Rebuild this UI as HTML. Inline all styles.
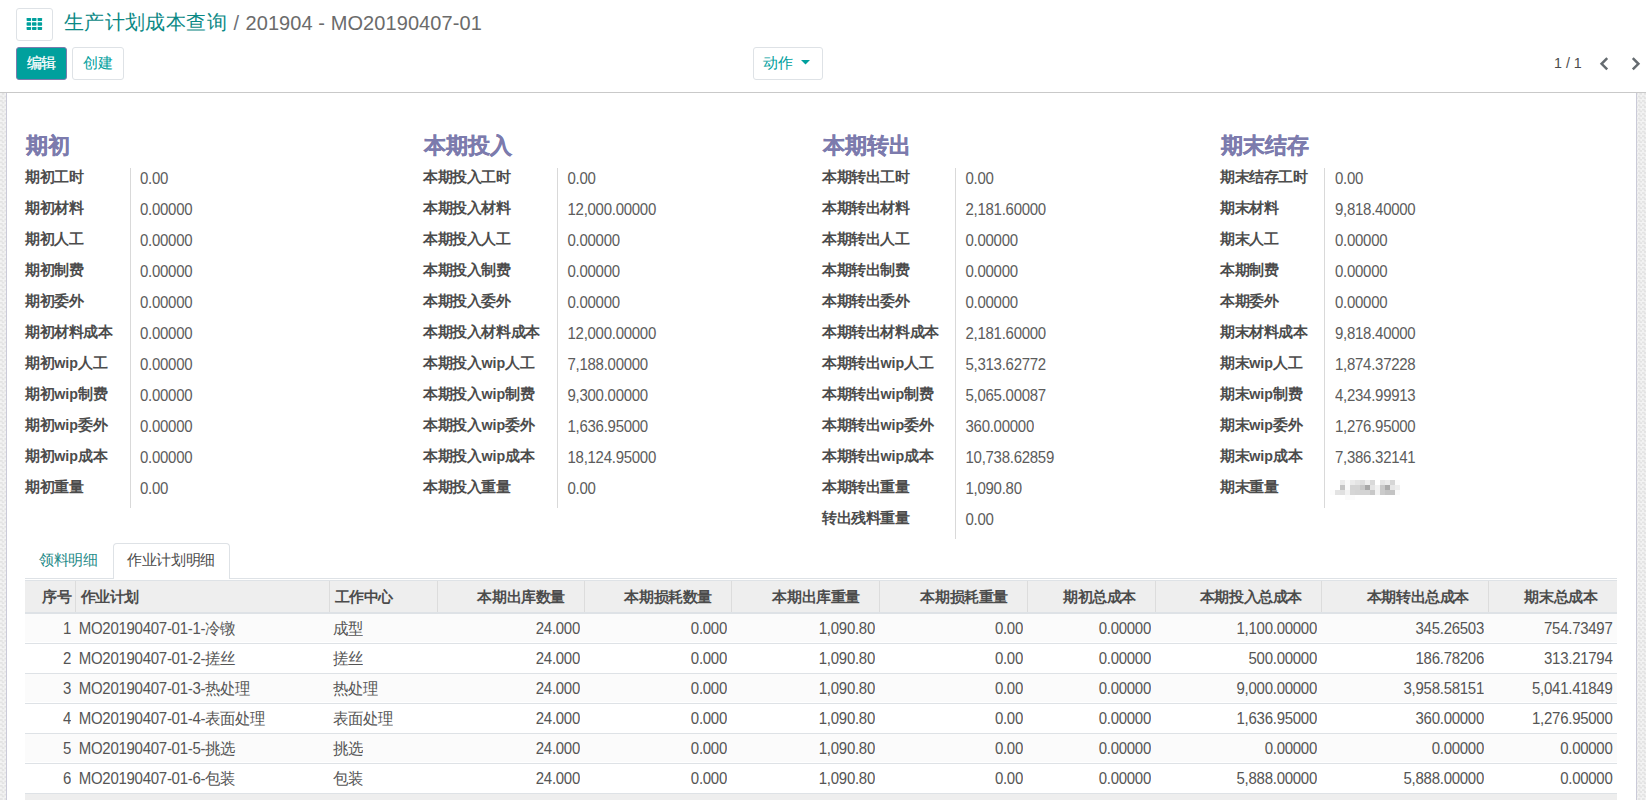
<!DOCTYPE html><html><head><meta charset="utf-8"><style>
*{box-sizing:border-box;margin:0;padding:0}
html,body{width:1646px;height:800px;overflow:hidden;background:#fff;font-family:"Liberation Sans", sans-serif;color:#4c4c4c}
.a{position:absolute;white-space:nowrap}
.cp{position:absolute;left:0;top:0;width:1646px;height:93px;background:#fff;border-bottom:1px solid #c9c9c9}
.bg{position:absolute;left:0;top:93px;width:1646px;height:707px;background:repeating-conic-gradient(#e3e3e3 0 25%,#f3f3f3 0 50%) 0 0/4.4px 4.4px}
.sheet{position:absolute;left:6px;top:93px;width:1631px;height:707px;background:#fff;border-left:1px solid #cacad8;border-right:1px solid #cacad8}
.btn{position:absolute;border:1px solid #dee2e6;border-radius:3px;background:#fff;color:#00A09D;font-size:14.3px;line-height:30.5px;text-align:center}
.btn .c{font-size:14.9px;letter-spacing:-0.3px}
.h{position:absolute;font-size:22px;font-weight:bold;color:#7C7BAD;line-height:30px;white-space:nowrap;-webkit-text-stroke:0.3px #7C7BAD}
.lb{position:absolute;font-size:14.3px;font-weight:bold;color:#4c4c4c;line-height:20px;white-space:nowrap}
.lb .c{font-size:14.9px;letter-spacing:-0.4px}
.vl{position:absolute;font-size:15px;letter-spacing:-0.27px;transform:scaleY(1.04);transform-origin:0 15px;color:#5c5c5c;line-height:20px;white-space:nowrap}
.sep{position:absolute;width:1px;background:#d9d9d9}
.tab{position:absolute;font-size:14.3px;line-height:20px;white-space:nowrap}
.tab .c{font-size:14.95px;letter-spacing:-0.35px}
.th{position:absolute;font-size:14.3px;font-weight:bold;color:#4c4c4c;line-height:20px;white-space:nowrap}
.th .c{font-size:14.95px;letter-spacing:-0.4px}
.td{position:absolute;font-size:15px;letter-spacing:-0.27px;transform:scaleY(1.04);transform-origin:0 15px;color:#555;line-height:20px;white-space:nowrap}
.td .c{font-size:15.0px;letter-spacing:0}
.ttl .c{font-size:20px;letter-spacing:0.45px}
</style></head><body><div class="cp"></div>
<div class="bg"></div>
<div class="sheet"></div>
<div class="a" style="left:16px;top:8px;width:37px;height:33px;border:1px solid #dee2e6;border-radius:3px;background:#fff"></div>
<svg class="a" style="left:26px;top:17px" width="17" height="14" viewBox="0 0 17 14"><rect x="0.6" y="0.9" width="4.5" height="3.0" rx="0.7" fill="#00A09D"/><rect x="6.0" y="0.9" width="4.5" height="3.0" rx="0.7" fill="#00A09D"/><rect x="11.6" y="0.9" width="4.5" height="3.0" rx="0.7" fill="#00A09D"/><rect x="0.6" y="5.2" width="4.5" height="3.6" rx="0.7" fill="#00A09D"/><rect x="6.0" y="5.2" width="4.5" height="3.6" rx="0.7" fill="#00A09D"/><rect x="11.6" y="5.2" width="4.5" height="3.6" rx="0.7" fill="#00A09D"/><rect x="0.6" y="9.9" width="4.5" height="3.0" rx="0.7" fill="#00A09D"/><rect x="6.0" y="9.9" width="4.5" height="3.0" rx="0.7" fill="#00A09D"/><rect x="11.6" y="9.9" width="4.5" height="3.0" rx="0.7" fill="#00A09D"/></svg>
<div class="a ttl" style="left:63.7px;top:9px;font-size:20px;line-height:26px;color:#0b8985"><span class="c">生产计划成本查询</span></div>
<div class="a" style="left:233.5px;top:9.5px;font-size:20px;line-height:26px;color:#6e7177">/</div>
<div class="a" style="left:245.5px;top:9.5px;letter-spacing:0.08px;font-size:20px;line-height:26px;color:#6b6b6b;transform:scaleY(1.05);transform-origin:0 20px">201904 - MO20190407-01</div>
<div class="btn" style="left:16px;top:47px;width:51px;height:33px;background:#00A09D;border-color:#7C7BAD;color:#fff;-webkit-text-stroke:0.25px #fff;line-height:30px"><span class="c">编辑</span></div>
<div class="btn" style="left:72px;top:47px;width:52px;height:33px"><span class="c">创建</span></div>
<div class="btn" style="left:753px;top:47px;width:70px;height:33px;text-align:left;padding-left:9px"><span class="c">动作</span></div>
<svg class="a" style="left:801px;top:60px" width="9" height="5" viewBox="0 0 9 5"><path d="M0 0H9L4.5 4.5Z" fill="#00A09D"/></svg>
<div class="a" style="left:1554px;top:53px;font-size:14.3px;line-height:20px;color:#4c4c4c">1 / 1</div>
<svg class="a" style="left:1598px;top:55.5px" width="12" height="16" viewBox="0 0 12 16"><path d="M9.2 2.2L3.6 7.8L9.2 13.4" stroke="#656b70" stroke-width="2.5" fill="none"/></svg>
<svg class="a" style="left:1629.5px;top:55.5px" width="12" height="16" viewBox="0 0 12 16"><path d="M2.8 2.2L8.4 7.8L2.8 13.4" stroke="#656b70" stroke-width="2.5" fill="none"/></svg>
<div class="h" style="left:26px;top:130.6px">期初</div>
<div class="sep" style="left:130.0px;top:168px;height:340px"></div>
<div class="lb" style="left:25px;top:166.5px"><span class="c">期初工时</span></div>
<div class="vl" style="left:140px;top:169px">0.00</div>
<div class="lb" style="left:25px;top:197.5px"><span class="c">期初材料</span></div>
<div class="vl" style="left:140px;top:200px">0.00000</div>
<div class="lb" style="left:25px;top:228.5px"><span class="c">期初人工</span></div>
<div class="vl" style="left:140px;top:231px">0.00000</div>
<div class="lb" style="left:25px;top:259.5px"><span class="c">期初制费</span></div>
<div class="vl" style="left:140px;top:262px">0.00000</div>
<div class="lb" style="left:25px;top:290.5px"><span class="c">期初委外</span></div>
<div class="vl" style="left:140px;top:293px">0.00000</div>
<div class="lb" style="left:25px;top:321.5px"><span class="c">期初材料成本</span></div>
<div class="vl" style="left:140px;top:324px">0.00000</div>
<div class="lb" style="left:25px;top:352.5px"><span class="c">期初</span>wip<span class="c">人工</span></div>
<div class="vl" style="left:140px;top:355px">0.00000</div>
<div class="lb" style="left:25px;top:383.5px"><span class="c">期初</span>wip<span class="c">制费</span></div>
<div class="vl" style="left:140px;top:386px">0.00000</div>
<div class="lb" style="left:25px;top:414.5px"><span class="c">期初</span>wip<span class="c">委外</span></div>
<div class="vl" style="left:140px;top:417px">0.00000</div>
<div class="lb" style="left:25px;top:445.5px"><span class="c">期初</span>wip<span class="c">成本</span></div>
<div class="vl" style="left:140px;top:448px">0.00000</div>
<div class="lb" style="left:25px;top:476.5px"><span class="c">期初重量</span></div>
<div class="vl" style="left:140px;top:479px">0.00</div>
<div class="h" style="left:424px;top:130.6px">本期投入</div>
<div class="sep" style="left:557.0px;top:168px;height:340px"></div>
<div class="lb" style="left:423px;top:166.5px"><span class="c">本期投入工时</span></div>
<div class="vl" style="left:567.5px;top:169px">0.00</div>
<div class="lb" style="left:423px;top:197.5px"><span class="c">本期投入材料</span></div>
<div class="vl" style="left:567.5px;top:200px">12,000.00000</div>
<div class="lb" style="left:423px;top:228.5px"><span class="c">本期投入人工</span></div>
<div class="vl" style="left:567.5px;top:231px">0.00000</div>
<div class="lb" style="left:423px;top:259.5px"><span class="c">本期投入制费</span></div>
<div class="vl" style="left:567.5px;top:262px">0.00000</div>
<div class="lb" style="left:423px;top:290.5px"><span class="c">本期投入委外</span></div>
<div class="vl" style="left:567.5px;top:293px">0.00000</div>
<div class="lb" style="left:423px;top:321.5px"><span class="c">本期投入材料成本</span></div>
<div class="vl" style="left:567.5px;top:324px">12,000.00000</div>
<div class="lb" style="left:423px;top:352.5px"><span class="c">本期投入</span>wip<span class="c">人工</span></div>
<div class="vl" style="left:567.5px;top:355px">7,188.00000</div>
<div class="lb" style="left:423px;top:383.5px"><span class="c">本期投入</span>wip<span class="c">制费</span></div>
<div class="vl" style="left:567.5px;top:386px">9,300.00000</div>
<div class="lb" style="left:423px;top:414.5px"><span class="c">本期投入</span>wip<span class="c">委外</span></div>
<div class="vl" style="left:567.5px;top:417px">1,636.95000</div>
<div class="lb" style="left:423px;top:445.5px"><span class="c">本期投入</span>wip<span class="c">成本</span></div>
<div class="vl" style="left:567.5px;top:448px">18,124.95000</div>
<div class="lb" style="left:423px;top:476.5px"><span class="c">本期投入重量</span></div>
<div class="vl" style="left:567.5px;top:479px">0.00</div>
<div class="h" style="left:823px;top:130.6px">本期转出</div>
<div class="sep" style="left:955.0px;top:168px;height:371px"></div>
<div class="lb" style="left:822px;top:166.5px"><span class="c">本期转出工时</span></div>
<div class="vl" style="left:965.5px;top:169px">0.00</div>
<div class="lb" style="left:822px;top:197.5px"><span class="c">本期转出材料</span></div>
<div class="vl" style="left:965.5px;top:200px">2,181.60000</div>
<div class="lb" style="left:822px;top:228.5px"><span class="c">本期转出人工</span></div>
<div class="vl" style="left:965.5px;top:231px">0.00000</div>
<div class="lb" style="left:822px;top:259.5px"><span class="c">本期转出制费</span></div>
<div class="vl" style="left:965.5px;top:262px">0.00000</div>
<div class="lb" style="left:822px;top:290.5px"><span class="c">本期转出委外</span></div>
<div class="vl" style="left:965.5px;top:293px">0.00000</div>
<div class="lb" style="left:822px;top:321.5px"><span class="c">本期转出材料成本</span></div>
<div class="vl" style="left:965.5px;top:324px">2,181.60000</div>
<div class="lb" style="left:822px;top:352.5px"><span class="c">本期转出</span>wip<span class="c">人工</span></div>
<div class="vl" style="left:965.5px;top:355px">5,313.62772</div>
<div class="lb" style="left:822px;top:383.5px"><span class="c">本期转出</span>wip<span class="c">制费</span></div>
<div class="vl" style="left:965.5px;top:386px">5,065.00087</div>
<div class="lb" style="left:822px;top:414.5px"><span class="c">本期转出</span>wip<span class="c">委外</span></div>
<div class="vl" style="left:965.5px;top:417px">360.00000</div>
<div class="lb" style="left:822px;top:445.5px"><span class="c">本期转出</span>wip<span class="c">成本</span></div>
<div class="vl" style="left:965.5px;top:448px">10,738.62859</div>
<div class="lb" style="left:822px;top:476.5px"><span class="c">本期转出重量</span></div>
<div class="vl" style="left:965.5px;top:479px">1,090.80</div>
<div class="lb" style="left:822px;top:507.5px"><span class="c">转出残料重量</span></div>
<div class="vl" style="left:965.5px;top:510px">0.00</div>
<div class="h" style="left:1221px;top:130.6px">期末结存</div>
<div class="sep" style="left:1324.0px;top:168px;height:340px"></div>
<div class="lb" style="left:1220px;top:166.5px"><span class="c">期末结存工时</span></div>
<div class="vl" style="left:1335px;top:169px">0.00</div>
<div class="lb" style="left:1220px;top:197.5px"><span class="c">期末材料</span></div>
<div class="vl" style="left:1335px;top:200px">9,818.40000</div>
<div class="lb" style="left:1220px;top:228.5px"><span class="c">期末人工</span></div>
<div class="vl" style="left:1335px;top:231px">0.00000</div>
<div class="lb" style="left:1220px;top:259.5px"><span class="c">本期制费</span></div>
<div class="vl" style="left:1335px;top:262px">0.00000</div>
<div class="lb" style="left:1220px;top:290.5px"><span class="c">本期委外</span></div>
<div class="vl" style="left:1335px;top:293px">0.00000</div>
<div class="lb" style="left:1220px;top:321.5px"><span class="c">期末材料成本</span></div>
<div class="vl" style="left:1335px;top:324px">9,818.40000</div>
<div class="lb" style="left:1220px;top:352.5px"><span class="c">期末</span>wip<span class="c">人工</span></div>
<div class="vl" style="left:1335px;top:355px">1,874.37228</div>
<div class="lb" style="left:1220px;top:383.5px"><span class="c">期末</span>wip<span class="c">制费</span></div>
<div class="vl" style="left:1335px;top:386px">4,234.99913</div>
<div class="lb" style="left:1220px;top:414.5px"><span class="c">期末</span>wip<span class="c">委外</span></div>
<div class="vl" style="left:1335px;top:417px">1,276.95000</div>
<div class="lb" style="left:1220px;top:445.5px"><span class="c">期末</span>wip<span class="c">成本</span></div>
<div class="vl" style="left:1335px;top:448px">7,386.32141</div>
<div class="lb" style="left:1220px;top:476.5px"><span class="c">期末重量</span></div>
<svg class="a" style="left:1330px;top:480px" width="70" height="20"><rect x="10" y="0" width="5" height="5" fill="#ebebeb"/><rect x="15" y="0" width="5" height="5" fill="#f9f9f9"/><rect x="20" y="0" width="5" height="5" fill="#ebebeb"/><rect x="25" y="0" width="5" height="5" fill="#e4e4e4"/><rect x="30" y="0" width="5" height="5" fill="#dedede"/><rect x="35" y="0" width="5" height="5" fill="#efefef"/><rect x="40" y="0" width="5" height="5" fill="#d9d9d9"/><rect x="50" y="0" width="5" height="5" fill="#e4e4e4"/><rect x="55" y="0" width="5" height="5" fill="#ebebeb"/><rect x="60" y="0" width="5" height="5" fill="#d6d6d6"/><rect x="65" y="0" width="5" height="5" fill="#fbfbfb"/><rect x="10" y="5" width="5" height="5" fill="#c4c4c4"/><rect x="15" y="5" width="5" height="5" fill="#f9f9f9"/><rect x="20" y="5" width="5" height="5" fill="#d4d4d4"/><rect x="25" y="5" width="5" height="5" fill="#d4d4d4"/><rect x="30" y="5" width="5" height="5" fill="#c8c8c8"/><rect x="35" y="5" width="5" height="5" fill="#a8a8a8"/><rect x="40" y="5" width="5" height="5" fill="#e4e4e4"/><rect x="45" y="5" width="5" height="5" fill="#f2f2f2"/><rect x="50" y="5" width="5" height="5" fill="#c8c8c8"/><rect x="55" y="5" width="5" height="5" fill="#aaaaaa"/><rect x="60" y="5" width="5" height="5" fill="#e6e6e6"/><rect x="65" y="5" width="5" height="5" fill="#ededed"/><rect x="0" y="10" width="5" height="5" fill="#fcfcfc"/><rect x="5" y="10" width="5" height="5" fill="#e3e3e3"/><rect x="10" y="10" width="5" height="5" fill="#e0e0e0"/><rect x="15" y="10" width="5" height="5" fill="#f2f2f2"/><rect x="20" y="10" width="5" height="5" fill="#d6d6d6"/><rect x="25" y="10" width="5" height="5" fill="#d4d4d4"/><rect x="30" y="10" width="5" height="5" fill="#d4d4d4"/><rect x="35" y="10" width="5" height="5" fill="#d4d4d4"/><rect x="40" y="10" width="5" height="5" fill="#c8c8c8"/><rect x="45" y="10" width="5" height="5" fill="#f2f2f2"/><rect x="50" y="10" width="5" height="5" fill="#cbcbcb"/><rect x="55" y="10" width="5" height="5" fill="#c4c4c4"/><rect x="60" y="10" width="5" height="5" fill="#c4c4c4"/><rect x="65" y="10" width="5" height="5" fill="#fafafa"/><rect x="15" y="15" width="5" height="5" fill="#fafafa"/><rect x="20" y="15" width="5" height="5" fill="#fcfcfc"/></svg>
<div class="a" style="left:25px;top:578px;width:1592px;height:1px;background:#dee2e6"></div>
<div class="a" style="left:113px;top:543px;width:117px;height:36px;border:1px solid #dee2e6;border-bottom:none;border-radius:4px 4px 0 0;background:#fff"></div>
<div class="tab" style="left:39px;top:550px;color:#1f8b89"><span class="c">领料明细</span></div>
<div class="tab" style="left:127px;top:550px;color:#4c4c4c"><span class="c">作业计划明细</span></div>
<div class="a" style="left:25px;top:580px;width:1592px;height:34px;background:#eee;border-top:1px solid #dee2e6;border-bottom:2px solid #dee2e6"></div>
<div class="a" style="left:75.0px;top:581px;width:1px;height:31px;background:#dcdcdc"></div>
<div class="a" style="left:329.0px;top:581px;width:1px;height:31px;background:#dcdcdc"></div>
<div class="a" style="left:437.0px;top:581px;width:1px;height:31px;background:#dcdcdc"></div>
<div class="a" style="left:584.0px;top:581px;width:1px;height:31px;background:#dcdcdc"></div>
<div class="a" style="left:731.0px;top:581px;width:1px;height:31px;background:#dcdcdc"></div>
<div class="a" style="left:879.0px;top:581px;width:1px;height:31px;background:#dcdcdc"></div>
<div class="a" style="left:1027.0px;top:581px;width:1px;height:31px;background:#dcdcdc"></div>
<div class="a" style="left:1155.0px;top:581px;width:1px;height:31px;background:#dcdcdc"></div>
<div class="a" style="left:1321.0px;top:581px;width:1px;height:31px;background:#dcdcdc"></div>
<div class="a" style="left:1488.0px;top:581px;width:1px;height:31px;background:#dcdcdc"></div>
<div class="th" style="left:25px;width:46.5px;text-align:right;top:587px"><span class="c">序号</span></div>
<div class="th" style="left:80.5px;top:587px"><span class="c">作业计划</span></div>
<div class="th" style="left:334.5px;top:587px"><span class="c">工作中心</span></div>
<div class="th" style="left:437.5px;width:127.5px;text-align:right;top:587px"><span class="c">本期出库数量</span></div>
<div class="th" style="left:584.5px;width:127.5px;text-align:right;top:587px"><span class="c">本期损耗数量</span></div>
<div class="th" style="left:731.5px;width:128.5px;text-align:right;top:587px"><span class="c">本期出库重量</span></div>
<div class="th" style="left:879.5px;width:128.5px;text-align:right;top:587px"><span class="c">本期损耗重量</span></div>
<div class="th" style="left:1027.5px;width:108.5px;text-align:right;top:587px"><span class="c">期初总成本</span></div>
<div class="th" style="left:1155.5px;width:146.5px;text-align:right;top:587px"><span class="c">本期投入总成本</span></div>
<div class="th" style="left:1321.5px;width:147.5px;text-align:right;top:587px"><span class="c">本期转出总成本</span></div>
<div class="th" style="left:1488.5px;width:109.0px;text-align:right;top:587px"><span class="c">期末总成本</span></div>
<div class="a" style="left:25px;top:614px;width:1592px;height:28px;background:#fbfbfb"></div>
<div class="a" style="left:25px;top:643px;width:1592px;height:1px;background:#dee2e6"></div>
<div class="td" style="left:25px;width:46.0px;text-align:right;top:619px">1</div>
<div class="td" style="left:78.7px;top:619px">MO20190407-01-1-<span class="c">冷镦</span></div>
<div class="td" style="left:332.7px;top:619px"><span class="c">成型</span></div>
<div class="td" style="left:437.5px;width:142.5px;text-align:right;top:619px">24.000</div>
<div class="td" style="left:584.5px;width:142.5px;text-align:right;top:619px">0.000</div>
<div class="td" style="left:731.5px;width:143.5px;text-align:right;top:619px">1,090.80</div>
<div class="td" style="left:879.5px;width:143.5px;text-align:right;top:619px">0.00</div>
<div class="td" style="left:1027.5px;width:123.5px;text-align:right;top:619px">0.00000</div>
<div class="td" style="left:1155.5px;width:161.5px;text-align:right;top:619px">1,100.00000</div>
<div class="td" style="left:1321.5px;width:162.5px;text-align:right;top:619px">345.26503</div>
<div class="td" style="left:1488.5px;width:124.0px;text-align:right;top:619px">754.73497</div>
<div class="a" style="left:25px;top:673px;width:1592px;height:1px;background:#dee2e6"></div>
<div class="td" style="left:25px;width:46.0px;text-align:right;top:649px">2</div>
<div class="td" style="left:78.7px;top:649px">MO20190407-01-2-<span class="c">搓丝</span></div>
<div class="td" style="left:332.7px;top:649px"><span class="c">搓丝</span></div>
<div class="td" style="left:437.5px;width:142.5px;text-align:right;top:649px">24.000</div>
<div class="td" style="left:584.5px;width:142.5px;text-align:right;top:649px">0.000</div>
<div class="td" style="left:731.5px;width:143.5px;text-align:right;top:649px">1,090.80</div>
<div class="td" style="left:879.5px;width:143.5px;text-align:right;top:649px">0.00</div>
<div class="td" style="left:1027.5px;width:123.5px;text-align:right;top:649px">0.00000</div>
<div class="td" style="left:1155.5px;width:161.5px;text-align:right;top:649px">500.00000</div>
<div class="td" style="left:1321.5px;width:162.5px;text-align:right;top:649px">186.78206</div>
<div class="td" style="left:1488.5px;width:124.0px;text-align:right;top:649px">313.21794</div>
<div class="a" style="left:25px;top:674px;width:1592px;height:28px;background:#fbfbfb"></div>
<div class="a" style="left:25px;top:703px;width:1592px;height:1px;background:#dee2e6"></div>
<div class="td" style="left:25px;width:46.0px;text-align:right;top:679px">3</div>
<div class="td" style="left:78.7px;top:679px">MO20190407-01-3-<span class="c">热处理</span></div>
<div class="td" style="left:332.7px;top:679px"><span class="c">热处理</span></div>
<div class="td" style="left:437.5px;width:142.5px;text-align:right;top:679px">24.000</div>
<div class="td" style="left:584.5px;width:142.5px;text-align:right;top:679px">0.000</div>
<div class="td" style="left:731.5px;width:143.5px;text-align:right;top:679px">1,090.80</div>
<div class="td" style="left:879.5px;width:143.5px;text-align:right;top:679px">0.00</div>
<div class="td" style="left:1027.5px;width:123.5px;text-align:right;top:679px">0.00000</div>
<div class="td" style="left:1155.5px;width:161.5px;text-align:right;top:679px">9,000.00000</div>
<div class="td" style="left:1321.5px;width:162.5px;text-align:right;top:679px">3,958.58151</div>
<div class="td" style="left:1488.5px;width:124.0px;text-align:right;top:679px">5,041.41849</div>
<div class="a" style="left:25px;top:733px;width:1592px;height:1px;background:#dee2e6"></div>
<div class="td" style="left:25px;width:46.0px;text-align:right;top:709px">4</div>
<div class="td" style="left:78.7px;top:709px">MO20190407-01-4-<span class="c">表面处理</span></div>
<div class="td" style="left:332.7px;top:709px"><span class="c">表面处理</span></div>
<div class="td" style="left:437.5px;width:142.5px;text-align:right;top:709px">24.000</div>
<div class="td" style="left:584.5px;width:142.5px;text-align:right;top:709px">0.000</div>
<div class="td" style="left:731.5px;width:143.5px;text-align:right;top:709px">1,090.80</div>
<div class="td" style="left:879.5px;width:143.5px;text-align:right;top:709px">0.00</div>
<div class="td" style="left:1027.5px;width:123.5px;text-align:right;top:709px">0.00000</div>
<div class="td" style="left:1155.5px;width:161.5px;text-align:right;top:709px">1,636.95000</div>
<div class="td" style="left:1321.5px;width:162.5px;text-align:right;top:709px">360.00000</div>
<div class="td" style="left:1488.5px;width:124.0px;text-align:right;top:709px">1,276.95000</div>
<div class="a" style="left:25px;top:734px;width:1592px;height:28px;background:#fbfbfb"></div>
<div class="a" style="left:25px;top:763px;width:1592px;height:1px;background:#dee2e6"></div>
<div class="td" style="left:25px;width:46.0px;text-align:right;top:739px">5</div>
<div class="td" style="left:78.7px;top:739px">MO20190407-01-5-<span class="c">挑选</span></div>
<div class="td" style="left:332.7px;top:739px"><span class="c">挑选</span></div>
<div class="td" style="left:437.5px;width:142.5px;text-align:right;top:739px">24.000</div>
<div class="td" style="left:584.5px;width:142.5px;text-align:right;top:739px">0.000</div>
<div class="td" style="left:731.5px;width:143.5px;text-align:right;top:739px">1,090.80</div>
<div class="td" style="left:879.5px;width:143.5px;text-align:right;top:739px">0.00</div>
<div class="td" style="left:1027.5px;width:123.5px;text-align:right;top:739px">0.00000</div>
<div class="td" style="left:1155.5px;width:161.5px;text-align:right;top:739px">0.00000</div>
<div class="td" style="left:1321.5px;width:162.5px;text-align:right;top:739px">0.00000</div>
<div class="td" style="left:1488.5px;width:124.0px;text-align:right;top:739px">0.00000</div>
<div class="a" style="left:25px;top:793px;width:1592px;height:1px;background:#dee2e6"></div>
<div class="td" style="left:25px;width:46.0px;text-align:right;top:769px">6</div>
<div class="td" style="left:78.7px;top:769px">MO20190407-01-6-<span class="c">包装</span></div>
<div class="td" style="left:332.7px;top:769px"><span class="c">包装</span></div>
<div class="td" style="left:437.5px;width:142.5px;text-align:right;top:769px">24.000</div>
<div class="td" style="left:584.5px;width:142.5px;text-align:right;top:769px">0.000</div>
<div class="td" style="left:731.5px;width:143.5px;text-align:right;top:769px">1,090.80</div>
<div class="td" style="left:879.5px;width:143.5px;text-align:right;top:769px">0.00</div>
<div class="td" style="left:1027.5px;width:123.5px;text-align:right;top:769px">0.00000</div>
<div class="td" style="left:1155.5px;width:161.5px;text-align:right;top:769px">5,888.00000</div>
<div class="td" style="left:1321.5px;width:162.5px;text-align:right;top:769px">5,888.00000</div>
<div class="td" style="left:1488.5px;width:124.0px;text-align:right;top:769px">0.00000</div>
<div class="a" style="left:25px;top:794px;width:1592px;height:6px;background:#eee"></div></body></html>
